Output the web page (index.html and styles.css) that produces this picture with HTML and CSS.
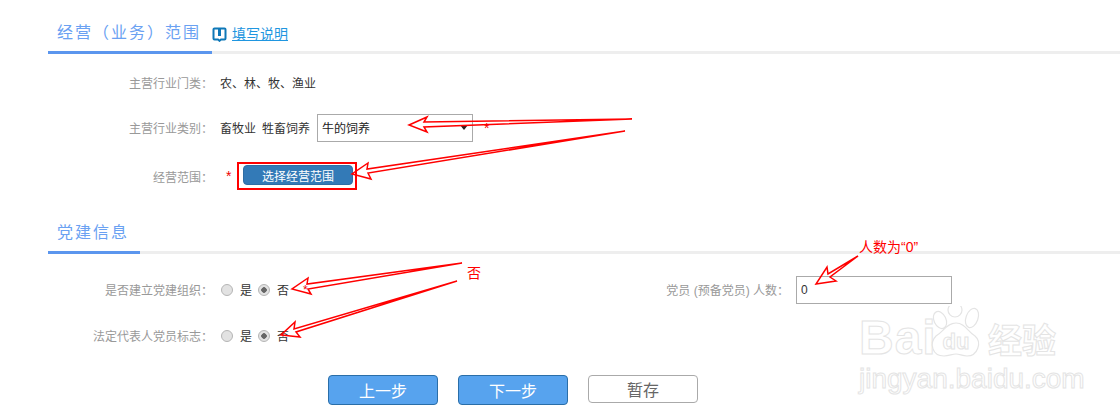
FILE: index.html
```html
<!DOCTYPE html>
<html lang="zh-CN">
<head>
    <meta charset="UTF-8">
    <title>经营范围</title>
    <link rel="stylesheet" href="styles.css">
</head>
<body>
    <div class="page">
        <!-- 经营范围 -->
        <div class="section-head">
            <h3 class="section-title">经营（业务）范围</h3>
            <a class="help-link" href="#">
                <svg class="help-icon" width="15" height="15" viewBox="0 0 15 15">
                    <path d="M2.500 1.500h10a1 1 0 0 1 1 1v9a1 1 0 0 1-1 1h-3.500l-1.500 1.300-1.500-1.300h-3.500a1 1 0 0 1-1-1v-9a1 1 0 0 1 1-1z" fill="none" stroke="#0f78b8" stroke-width="2"/>
                    <path d="M7.500 2v7" stroke="#0f78b8" stroke-width="3"/>
                </svg>
                <span>填写说明</span>
            </a>
        </div>
        <div class="rows rows-first">
            <div class="form-row">
                <label class="label">主营行业门类：</label>
                <span class="value">农、林、牧、渔业</span>
            </div>
            <div class="form-row">
                <label class="label">主营行业类别：</label>
                <span class="value">畜牧业</span>
                <span class="value sub-value">牲畜饲养</span>
                <div class="select-box">牛的饲养</div>
                <span class="star star-select">*</span>
            </div>
            <div class="form-row row-scope">
                <label class="label">经营范围：</label>
                <span class="star star-scope">*</span>
                <span class="mark-box"><button class="btn-scope">选择经营范围</button></span>
            </div>
        </div>

        <!-- 党建信息 -->
        <div class="section-head">
            <h3 class="section-title">党建信息</h3>
        </div>
        <div class="rows rows-second">
            <div class="form-row">
                <div class="field-left">
                    <label class="label">是否建立党建组织：</label>
                    <input class="radio" type="radio" name="party">
                    <span class="radio-text">是</span>
                    <input class="radio" type="radio" name="party" checked>
                    <span class="radio-text">否</span>
                    <span class="star star-radio">*</span>
                </div>
                <label class="label label-wide">党员 (预备党员) 人数：</label>
                <input class="text-input" type="text" value="0">
            </div>
            <div class="form-row">
                <div class="field-left">
                    <label class="label">法定代表人党员标志：</label>
                    <input class="radio" type="radio" name="legal">
                    <span class="radio-text">是</span>
                    <input class="radio" type="radio" name="legal" checked>
                    <span class="radio-text">否</span>
                </div>
            </div>
        </div>

        <div class="actions">
            <button class="btn btn-primary">上一步</button>
            <button class="btn btn-primary">下一步</button>
            <button class="btn btn-plain">暂存</button>
        </div>
    </div>

    <!-- Hand drawn arrows on top of the screenshot -->
    <svg class="arrows" width="1120" height="416" viewBox="0 0 1120 416">
        <g fill="none" stroke="#f00" stroke-width="1.500" stroke-linejoin="miter">
            <polygon points="632,119 424,122 427,117 409,125 427,132 424,127"/>
            <polygon points="625,131 367,169 368,163 352,174 371,179 368,173"/>
            <polygon points="462,263 307,284 308,278 292,289 311,294 308,289"/>
            <polygon points="457,281 294,329 295,322 281,335 300,337 296,332"/>
            <polygon points="858,256 828,274 827,267 816,284 836,281 830,277"/>
        </g>
    </svg>
    <span class="note note-no">否</span>
    <span class="note note-count">人数为“0”</span>

    <!-- Watermark -->
    <div class="watermark">
        <div class="wm-top">
            <span class="wm-bai">Bai</span>
            <svg class="wm-paw" width="58" height="56" viewBox="0 0 58 56">
                <g fill="#fff" stroke="#e4e4e4" stroke-width="1.200">
                    <ellipse cx="13" cy="14" rx="6" ry="9" transform="rotate(-25 13 14)"/>
                    <ellipse cx="28" cy="4" rx="7" ry="7"/>
                    <ellipse cx="45" cy="12" rx="6" ry="10" transform="rotate(20 45 12)"/>
                    <path d="M29 17c9 0 12 9 19 13 7 6 3 20-8 20-5 0-7-2-11-2s-7 2-12 2c-12 0-15-13-8-20 7-4 11-13 20-13z"/>
                </g>
                <text class="wm-du" x="29" y="43" text-anchor="middle">du</text>
            </svg>
            <span class="wm-cn">经验</span>
        </div>
        <div class="wm-url">jingyan.baidu.com</div>
    </div>
</body>
</html>
```

FILE: styles.css
```css
body {
    margin: 0;
    background-color: #fff;
    font-family: "Liberation Sans", "Noto Sans CJK SC", sans-serif;
    font-size: 12px;
    color: #333;
    overflow: hidden;
}
.page {
    padding-left: 48px;
    height: 416px;
    box-sizing: border-box;
}

/* Section headers */
.section-head {
    display: flex;
    align-items: flex-start;
    height: 54px;
    box-sizing: border-box;
    border-bottom: 3px solid #eee;
}
.section-title {
    margin: 0;
    height: 54px;
    box-sizing: border-box;
    padding: 21px 11px 6px 9px;
    border-bottom: 3px solid #5b96ee;
    font-size: 16px;
    font-weight: normal;
    line-height: 24px;
    letter-spacing: 2px;
    color: #6aa1f2;
}
.help-link {
    display: flex;
    align-items: center;
    margin-top: 25px;
    gap: 5px;
    font-size: 14px;
    line-height: 18px;
    color: #1f96e0;
}
.help-icon { display: block; }

/* Form rows */
.rows {
    display: flex;
    flex-direction: column;
    gap: 15px;
}
.rows-first { padding-top: 14px; padding-bottom: 9px; }
.rows-second { padding-top: 21px; gap: 16px; }
.row-scope { margin-top: 3px; }
.form-row {
    display: flex;
    align-items: center;
    height: 30px;
}
.label {
    width: 165px;
    flex: none;
    padding-bottom: 2px;
    text-align: right;
    color: #999;
}
.row-scope .label { padding-bottom: 0; }
.value {
    margin-left: 7px;
    padding-bottom: 2px;
    color: #333;
}
.sub-value { margin-left: 6px; }
.select-box {
    position: relative;
    width: 156px;
    height: 28px;
    box-sizing: border-box;
    margin-left: 7px;
    padding-left: 4px;
    border: 1px solid #aaa;
    line-height: 29px;
    color: #222;
}
.select-box::after {
    content: "";
    position: absolute;
    right: 4px;
    top: 10px;
    border-left: 4px solid transparent;
    border-right: 4px solid transparent;
    border-top: 5px solid #222;
}
.star { color: #e00; font-size: 14px; }
.star-select { margin-left: 11px; }
.star-scope { margin-left: 13px; width: 11px; }
.star-radio { margin-left: 8px; font-size: 12px; }
.mark-box {
    display: flex;
    height: 28px;
    box-sizing: border-box;
    padding: 1px 2px 1px 4px;
    border: 2px solid #f00;
}
.btn-scope {
    width: 110px;
    height: 20px;
    padding: 0;
    border: 1px solid #2e6da4;
    border-radius: 4px;
    background-color: #337ab7;
    color: #fff;
    font-family: inherit;
    font-size: 12px;
}

/* Radios */
.field-left {
    display: flex;
    align-items: center;
    width: 560px;
    flex: none;
}
.radio {
    appearance: none;
    width: 12px;
    height: 12px;
    margin: 0;
    border: 1px solid #b5b5b5;
    border-radius: 50%;
    box-sizing: border-box;
    background-color: #e2e2e2;
}
.field-left .label + .radio { margin-left: 8px; }
.radio:checked {
    background: radial-gradient(circle, #666 0, #666 2.500px, #e2e2e2 3px);
}
.radio-text {
    width: 18px;
    margin-left: 7px;
    padding-bottom: 2px;
    color: #333;
}
.label-wide { width: 181px; }
.text-input {
    width: 156px;
    height: 28px;
    box-sizing: border-box;
    margin-left: 7px;
    padding: 1px 4px;
    border: 1px solid #aaa;
    font-family: inherit;
    font-size: 12px;
    color: #333;
}

/* Bottom buttons */
.actions {
    display: flex;
    align-items: flex-start;
    gap: 20px;
    margin-top: 24px;
    padding-left: 280px;
}
.btn {
    width: 110px;
    box-sizing: border-box;
    padding: 0;
    border-radius: 4px;
    font-family: inherit;
    font-size: 16px;
}
.btn-primary {
    height: 30px;
    border: 1px solid #2a6ea8;
    background-color: #57a3ee;
    color: #fff;
}
.btn-plain {
    height: 28px;
    border: 1px solid #aaa;
    background-color: #fff;
    color: #666;
}

/* Annotations */
.arrows {
    position: absolute;
    left: 0;
    top: 0;
    pointer-events: none;
}
.note {
    position: absolute;
    font-size: 14px;
    line-height: 18px;
    color: #f00;
}
.note-no { left: 467px; top: 264px; }
.note-count { left: 859px; top: 238px; }

/* Watermark */
.watermark {
    position: absolute;
    left: 859px;
    top: 310px;
    width: 220px;
    color: #fff;
    -webkit-text-stroke: 1px #e4e4e4;
}
.wm-top {
    display: flex;
    align-items: flex-end;
    height: 52px;
}
.wm-bai {
    width: 72px;
    font-size: 48px;
    font-weight: bold;
    line-height: 48px;
    letter-spacing: 1px;
}
.wm-paw {
    margin-left: -4px;
    flex: none;
}
.wm-du {
    font-size: 22px;
    font-weight: bold;
    fill: #fff;
    stroke: #e4e4e4;
    stroke-width: 1;
}
.wm-cn {
    margin-left: 3px;
    font-size: 34px;
    font-weight: bold;
    line-height: 42px;
}
.wm-url {
    font-size: 28px;
    line-height: 32px;
    margin-top: 1px;
}
```
